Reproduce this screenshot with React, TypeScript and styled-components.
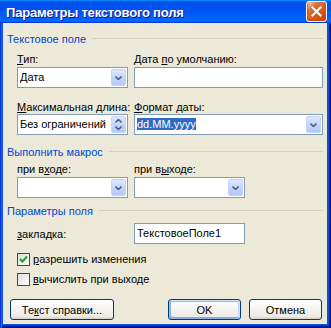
import React from 'react';
import styled, {createGlobalStyle} from 'styled-components';

const GlobalStyle = createGlobalStyle`
  body {
    margin: 0;
    background: #fff;
    font-family: "Liberation Sans", Arial, sans-serif;
    font-size: 11px;
    color: #000;
  }
`;

const Window = styled.div`
  width: 331px;
  height: 328px;
  box-sizing: border-box;
  display: flex;
  flex-direction: column;
  background: #0855dd;
  padding: 0 4px 4px 3px;
  box-shadow: inset 1px 0 #0831d9, inset 2px 0 #166aee,
  inset -1px 0 #00138c, inset -2px 0 #001ea0,
  inset 0 -1px #00138c, inset 0 -2px #001ea0, inset 0 -3px #003bda;
`;

const TitleBar = styled.div`
  height: 23px;
  margin: 0 -4px 0 -3px;
  padding: 1px 4px 0 6px;
  box-sizing: border-box;
  display: flex;
  align-items: center;
  justify-content: space-between;
  background: linear-gradient(180deg, #0997ff, #0053ee 8%, #0050ee 40%, #06f 88%, #06f 93%, #005bff 95%, #003dd7 96%, #003dd7);
`;

const Title = styled.span`
  font-family: "Liberation Sans", Arial, sans-serif;
  font-weight: bold;
  font-size: 13px;
  line-height: 15px;
  color: #fff;
  text-shadow: 1px 1px #0f1089;
  letter-spacing: -0.2px;
`;

const CloseButton = styled.div`
  width: 21px;
  height: 21px;
  margin-top: -1px;
  box-sizing: border-box;
  border: 1px solid #fff;
  border-radius: 3px;
  display: flex;
  align-items: center;
  justify-content: center;
  background: radial-gradient(circle at 90% 90%, #cc4600 0%, #dc6527 55%, #cd7546 70%, #ffccb2 90%, #fff 100%);
  box-shadow: inset 0 -1px 2px 1px #da4600;
`;

const Body = styled.div`
  flex: 1;
  background: #ece9d8;
  padding: 10px 4px 0 4px;
  display: flex;
  flex-direction: column;
`;

const GroupHeader = styled.div<{ $top?: number }>`
  display: flex;
  align-items: center;
  height: 13px;
  line-height: 13px;
  margin-top: ${p => p.$top ?? 0}px;
  color: #0046d5;
  white-space: nowrap;

  &::after {
    content: '';
    flex: 1;
    height: 1px;
    margin: 0 0 2px 6px;
    background: #d0d0bf;
  }
`;

const FieldGrid = styled.div<{ $top: number }>`
  display: grid;
  grid-template-columns: 111px 189px;
  column-gap: 6px;
  row-gap: 13px;
  padding-left: 10px;
  margin-top: ${p => p.$top}px;
`;

const Field = styled.div`
  display: flex;
  flex-direction: column;
`;

const Label = styled.div<{ $gap?: number }>`
  line-height: 13px;
  height: 13px;
  margin-bottom: ${p => p.$gap ?? 1}px;
  white-space: nowrap;
`;

const Box = styled.div<{ $width?: number }>`
  height: 21px;
  width: ${p => (p.$width ? `${p.$width}px` : 'auto')};
  box-sizing: border-box;
  border: 1px solid #7f9db9;
  background: #fff;
  display: flex;
  align-items: center;
  padding-left: 2px;
  line-height: 13px;
`;

const BoxText = styled.span`
  flex: 1;
  white-space: nowrap;
  overflow: hidden;
`;

const Selected = styled.span`
  background: #316ac5;
  color: #fff;
`;

const DropButton = styled.div`
  width: 15px;
  height: 17px;
  margin-right: 1px;
  box-sizing: border-box;
  border: 1px solid #c3d3fd;
  border-radius: 2px;
  background: linear-gradient(180deg, #dfe8fd 0%, #c5d6fb 50%, #b3c8f5 100%);
  display: flex;
  flex-direction: column;
  align-items: center;
  justify-content: center;
  gap: 3px;
`;

const Row = styled.div<{ $top: number }>`
  display: grid;
  grid-template-columns: 111px 111px;
  column-gap: 6px;
  align-items: center;
  padding-left: 10px;
  margin-top: ${p => p.$top}px;
`;

const CheckRow = styled.div<{ $top: number }>`
  display: flex;
  align-items: center;
  gap: 3px;
  height: 13px;
  line-height: 13px;
  padding-left: 10px;
  margin-top: ${p => p.$top}px;
`;

const CheckBox = styled.div`
  width: 13px;
  height: 13px;
  box-sizing: border-box;
  border: 1px solid #1c5180;
  background: linear-gradient(135deg, #dcdcd7, #fff);
  display: flex;
  align-items: center;
  justify-content: center;
`;

const ButtonBar = styled.div`
  display: flex;
  justify-content: space-between;
  margin-top: 13px;
  padding: 0 1px 0 3px;
`;

const ButtonGroup = styled.div`
  display: flex;
  gap: 8px;
`;

const Button = styled.div<{ $width: number; $default?: boolean }>`
  width: ${p => p.$width}px;
  height: 21px;
  box-sizing: border-box;
  border: 1px solid #003c74;
  border-radius: 3px;
  display: flex;
  align-items: center;
  justify-content: center;
  background: linear-gradient(180deg, #fff, #ecebe6 86%, #d6d0c5);
  box-shadow: ${p => p.$default
    ? 'inset -1px 1px #cee7ff, inset 1px 2px #98b8ea, inset -2px 2px #bcd4f6, inset 1px -1px #89ade4, inset 2px -2px #89ade4'
    : 'none'};
  white-space: nowrap;
`;

const Key = styled.span`
  text-decoration: underline;
`;

function Chevron({up}: { up?: boolean }) {
  return (
    <svg width="7" height="4" viewBox="0 0 7 4">
      <polyline points={up ? '0.5,3.5 3.5,0.5 6.5,3.5' : '0.5,0.5 3.5,3.5 6.5,0.5'}
                fill="none" stroke="#4d6185" strokeWidth="1.6"/>
    </svg>
  );
}

function Combo({children, width}: { children?: React.ReactNode; width?: number }) {
  return (
    <Box $width={width}>
      <BoxText>{children}</BoxText>
      <DropButton><Chevron/></DropButton>
    </Box>
  );
}

export default function App() {
  return (
    <>
      <GlobalStyle/>
      <Window>
        <TitleBar>
          <Title>Параметры текстового поля</Title>
          <CloseButton>
            <svg width="11" height="11" viewBox="0 0 11 11">
              <path d="M1.5 1.5 L9.5 9.5 M9.5 1.5 L1.5 9.5" stroke="#fff" strokeWidth="2" strokeLinecap="square"/>
            </svg>
          </CloseButton>
        </TitleBar>
        <Body>
          <GroupHeader>Текстовое поле</GroupHeader>
          <FieldGrid $top={7}>
            <Field>
              <Label><Key>Т</Key>ип:</Label>
              <Combo>Дата</Combo>
            </Field>
            <Field>
              <Label>Дата <Key>п</Key>о умолчанию:</Label>
              <Box/>
            </Field>
            <Field>
              <Label $gap={0}><Key>М</Key>аксимальная длина:</Label>
              <Box>
                <BoxText>Без ограничений</BoxText>
                <DropButton><Chevron up/><Chevron/></DropButton>
              </Box>
            </Field>
            <Field>
              <Label $gap={0}><Key>Ф</Key>ормат даты:</Label>
              <Combo><Selected>dd.MM.yyyy</Selected></Combo>
            </Field>
          </FieldGrid>

          <GroupHeader $top={11}>Выполнить макрос</GroupHeader>
          <FieldGrid $top={4}>
            <Field>
              <Label>при в<Key>х</Key>оде:</Label>
              <Combo/>
            </Field>
            <Field>
              <Label>при в<Key>ы</Key>ходе:</Label>
              <Combo width={111}/>
            </Field>
          </FieldGrid>

          <GroupHeader $top={7}>Параметры поля</GroupHeader>
          <Row $top={5}>
            <span><Key>з</Key>акладка:</span>
            <Box>ТекстовоеПоле1</Box>
          </Row>
          <CheckRow $top={9}>
            <CheckBox>
              <svg width="9" height="9" viewBox="0 0 9 9">
                <polyline points="1,4 3.5,6.5 8,1.5" fill="none" stroke="#21a121" strokeWidth="2"/>
              </svg>
            </CheckBox>
            <span><Key>р</Key>азрешить изменения</span>
          </CheckRow>
          <CheckRow $top={7}>
            <CheckBox/>
            <span><Key>в</Key>ычислить при выходе</span>
          </CheckRow>

          <ButtonBar>
            <Button $width={104}>Те<Key>к</Key>ст справки...</Button>
            <ButtonGroup>
              <Button $width={73} $default>OK</Button>
              <Button $width={73}>Отмена</Button>
            </ButtonGroup>
          </ButtonBar>
        </Body>
      </Window>
    </>
  );
}
